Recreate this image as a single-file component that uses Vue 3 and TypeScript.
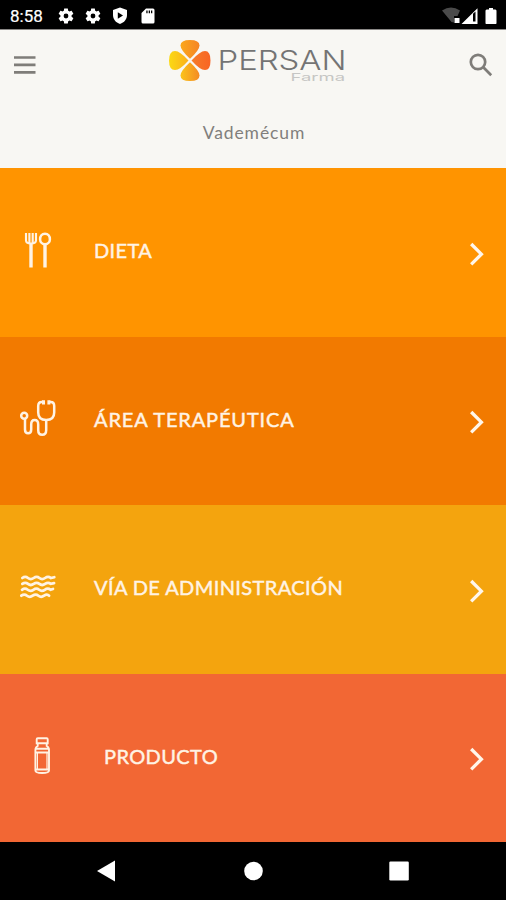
<script setup lang="ts">
interface MenuRow {
  id: 'diet' | 'area' | 'route' | 'product'
  label: string
}

const rows: MenuRow[] = [
  { id: 'diet', label: 'DIETA' },
  { id: 'area', label: 'ÁREA TERAPÉUTICA' },
  { id: 'route', label: 'VÍA DE ADMINISTRACIÓN' },
  { id: 'product', label: 'PRODUCTO' },
]

const gearPath =
  'M19.43 12.98c.04-.32.07-.64.07-.98s-.03-.66-.07-.98l2.11-1.65c.19-.15.24-.42.12-.64l-2-3.46c-.12-.22-.39-.3-.61-.22l-2.49 1c-.52-.4-1.08-.73-1.69-.98l-.38-2.65C14.46 2.18 14.25 2 14 2h-4c-.25 0-.46.18-.49.42l-.38 2.65c-.61.25-1.17.59-1.69.98l-2.49-1c-.23-.09-.49 0-.61.22l-2 3.46c-.13.22-.07.49.12.64l2.11 1.65c-.04.32-.07.65-.07.98s.03.66.07.98l-2.11 1.65c-.19.15-.24.42-.12.64l2 3.46c.12.22.39.3.61.22l2.49-1c.52.4 1.08.73 1.69.98l.38 2.65c.03.24.24.42.49.42h4c.25 0 .46-.18.49-.42l.38-2.65c.61-.25 1.17-.59 1.69-.98l2.49 1c.23.09.49 0 .61-.22l2-3.46c.12-.22.07-.49-.12-.64l-2.11-1.65zM12 15.2a3.2 3.2 0 1 1 0-6.4 3.2 3.2 0 0 1 0 6.4z'
</script>

<template>
  <div class="screen">
    <div class="status">
      <span class="clock">8:58</span>
      <svg class="gear" viewBox="0 0 24 24"><path :d="gearPath" /></svg>
      <svg class="gear second" viewBox="0 0 24 24"><path :d="gearPath" /></svg>
      <svg class="shield" viewBox="0 0 16 18">
        <path fill-rule="evenodd" d="M8 .5L15 3v5c0 4.3-2.8 7.500-7 9-4.200-1.500-7-4.700-7-9V3zM5.800 5.200v6.600L11 8.500z" />
      </svg>
      <svg class="card" viewBox="0 0 14 16">
        <path fill-rule="evenodd" d="M5 .4h7q1.500 0 1.500 1.500v12q0 1.500-1.500 1.500H2Q.500 15.400.500 13.900V5zM5.300 2.600v2.600h1.300V2.600zM7.700 2.600v2.600H9V2.600zM10 2.600v2.600h1.300V2.600z" />
      </svg>
      <svg class="signals" viewBox="0 0 56 18">
        <path class="wifi" d="M0 3.500Q9-2.500 18 3.500L15.500 9H12v6.500L9.500 15z" />
        <rect x="12.500" y="11" width="5" height="5" />
        <path fill-rule="evenodd" d="M35.500 1.200V17H19.500zM31 6.800V14.500h2.500V4.600z" />
        <path d="M44.700 2.500h2.300V1h4v1.500h2.300q1.200.3 1.200 1.200v12.600q0 .7-.7.700h-9.600q-.7 0-.7-.7V3.700q0-.9 1.200-1.200z" />
      </svg>
    </div>

    <header class="header">
      <div class="bar">
        <svg class="burger" viewBox="0 0 22 20">
          <path d="M0 2.500h21.500M0 9.900h21.500M0 17.300h21.500" />
        </svg>
        <svg class="logo" viewBox="0 0 180 48" role="img" aria-label="Persan Farma">
          <defs>
            <linearGradient id="petalTop" x1="0" x2="1"><stop offset="0" stop-color="#fba81c" /><stop offset="1" stop-color="#f58424" /></linearGradient>
            <linearGradient id="petalLeft" x1="0" x2="1"><stop offset="0" stop-color="#fbd914" /><stop offset="1" stop-color="#fbb01c" /></linearGradient>
            <linearGradient id="petalRight" x1="0" x2="1"><stop offset="0" stop-color="#f67c28" /><stop offset="1" stop-color="#f86424" /></linearGradient>
            <linearGradient id="petalBottom" x1="0" x2="1"><stop offset="0" stop-color="#fbc41a" /><stop offset="1" stop-color="#f48a22" /></linearGradient>
          </defs>
          <path fill="url(#petalTop)" d="M23 21.700Q13.500 13 13.500 8.500Q13.500 3 23 3T32.500 8.500Q32.500 13 23 21.700z" />
          <path fill="url(#petalRight)" d="M24.500 23.500Q33 14 38 14Q43.500 14 43.500 23.500T38 33Q33 33 24.500 23.500z" />
          <path fill="url(#petalBottom)" d="M23 25.300Q32.500 34 32.500 38.500Q32.500 44 23 44T13.500 38.500Q13.500 34 23 25.300z" />
          <path fill="url(#petalLeft)" d="M21.500 23.500Q13 33 8 33Q2 33 2 23.500T8 14Q13 14 21.500 23.500z" />
          <text class="brand" x="50.500" y="33" textLength="129" lengthAdjust="spacingAndGlyphs">PERSAN</text>
          <text class="sub" x="123.500" y="43.800" textLength="54.500" lengthAdjust="spacingAndGlyphs">Farma</text>
        </svg>
        <svg class="search" viewBox="0 0 24 24">
          <circle cx="9" cy="9" r="7.200" /><path d="M14.300 14.300L22.200 22.200" />
        </svg>
      </div>
      <h1 class="title">Vademécum</h1>
    </header>

    <main class="menu">
      <div v-for="row in rows" :key="row.id" class="row" :class="row.id">
        <svg class="icon" viewBox="0 0 40 40">
          <g v-if="row.id === 'diet'">
            <path class="thin" d="M8 3v7.500q0 3 5 3t5-3V3M11.400 3v10M14.700 3v10" />
            <path class="handle" d="M13 13v24.500M27 15v22.500" />
            <path class="line" d="M27 3.700c-3.100 0-4.900 2.700-4.900 5.500s1.900 5 4.900 5 4.900-2.200 4.900-5-1.800-5.500-4.900-5.500z" />
          </g>
          <g v-else-if="row.id === 'area'" class="line">
            <path d="M25 4h-1.300q-3.500 0-3.500 4v6.500q0 7.500 8 7.500t8-7.500V8q0-4-3.500-4h-1.500" />
            <path class="tip" d="M25.500 2.200v4.200M30.900 2.200v4.200" />
            <circle cx="6.200" cy="17.800" r="3" />
            <path d="M7 21v10.500q0 3.800 3.100 3.800t3.100-3.800v-5q0-4.500 3.500-4.500t3.500 4.500V32q0 4.800 4 4.800t4-4.800v-9.500" />
          </g>
          <g v-else-if="row.id === 'route'" class="wave">
            <path d="M4.300 11q3-2.200 5.700 0t5.700 0 5.700 0 5.700 0 5.700 0l3.500-.8" />
            <path d="M4.300 16.900q3-2.200 5.700 0t5.700 0 5.700 0 5.700 0 5.700 0l3.300-.8" />
            <path d="M4 22.800q3-2.200 5.700 0t5.700 0 5.700 0 5.700 0 5.700 0l2.500-.8" />
            <path d="M3.300 28.700q3-2.200 5.700 0t5.700 0 5.700 0 5.700 0 5 0" />
          </g>
          <g v-else class="bottle">
            <path d="M19.800 3.300h8.900q1 0 1 1v4h-11v-4q0-1 1.100-1zM19.700 8.300v2.700q-2.300 1.200-2.300 4v20.500q0 2.500 6.800 2.500t6.800-2.500V15q0-2.800-2.300-4V8.300M17 13.700h14.400M17.500 17.500h13.400M17.500 34.500h13.400" />
            <path class="edge" d="M19.400 18v16M29 18v16" />
          </g>
        </svg>
        <span class="label">{{ row.label }}</span>
        <svg class="chevron" viewBox="0 0 16 24"><path d="M2.200 2l10.200 10.200L2.200 22.400" /></svg>
      </div>
    </main>

    <nav class="nav">
      <svg viewBox="0 0 22 22"><path d="M1 11L19 .5v21z" /></svg>
      <svg viewBox="0 0 22 22"><circle cx="11.500" cy="11" r="9.300" /></svg>
      <svg viewBox="0 0 22 22"><rect x="1.300" y="1.500" width="19.500" height="19" rx="1.200" /></svg>
    </nav>
  </div>
</template>

<style>
body {
  margin: 0;
  background: #000;
}
</style>

<style scoped>
.screen {
  width: 506px;
  height: 900px;
  display: flex;
  flex-direction: column;
  overflow: hidden;
  background: #000;
  font-family: Lato, 'Open Sans', sans-serif;
}
svg {
  display: block;
  flex: none;
}
.status {
  box-sizing: border-box;
  height: 30px;
  flex: none;
  display: flex;
  align-items: center;
  padding: 2px 8px 0 10px;
  border-bottom: 1px solid #8a8886;
  fill: #fff;
}
.clock {
  width: 48px;
  color: #fff;
  font: 400 17px/20px Roboto, sans-serif;
  -webkit-text-stroke: 0.200px #fff;
}
.gear {
  width: 18px;
  height: 18px;
  margin-left: -1px;
}
.second {
  margin-left: 9px;
}
.shield {
  width: 16px;
  height: 18px;
  margin-left: 10px;
}
.card {
  width: 14px;
  height: 16px;
  margin-left: 12.500px;
}
.signals {
  width: 56px;
  height: 18px;
  margin-left: auto;
}
.wifi {
  fill: #4a4a4a;
}
.header {
  height: 138px;
  flex: none;
  background: #f8f7f3;
}
.bar {
  display: flex;
  align-items: center;
  height: 68px;
  padding: 0 13px 0 14px;
}
.burger {
  width: 22px;
  height: 20px;
  margin-top: 1px;
  fill: none;
  stroke: #7f7d79;
  stroke-width: 2.700;
}
.logo {
  width: 180px;
  height: 48px;
  margin: -6px 0 0 131px;
}
.brand {
  font: 300 27.500px Inter, sans-serif;
  fill: #747474;
}
.sub {
  font: 400 10.800px Inter, sans-serif;
  fill: #c6c6c4;
}
.search {
  width: 24px;
  height: 24px;
  margin: 2px 0 0 auto;
  fill: none;
  stroke: #7f7d79;
  stroke-width: 2.700;
}
.title {
  margin: 23px 0 0 2px;
  text-align: center;
  color: #817f7c;
  font: 400 17.500px/24px Lato, sans-serif;
  letter-spacing: 0.900px;
}
.menu {
  flex: none;
  height: 674px;
  display: grid;
  grid-template-rows: repeat(4, 1fr);
}
.row {
  display: flex;
  align-items: center;
  padding: 0 21px 0 18px;
  color: #fff3e4;
}
.diet { background: #ff9400; }
.area { background: #f27a00; }
.route { background: #f4a40e; }
.product { background: #f26734; }
.icon {
  width: 40px;
  height: 40px;
  margin-top: -5px;
  fill: none;
  stroke: #fff3e4;
}
.thin { stroke-width: 2.100; }
.handle { stroke-width: 3.400; }
.line { stroke-width: 2.500; }
.tip { stroke-width: 3; }
.wave { stroke-width: 2.700; stroke-linecap: round; }
.bottle { stroke-width: 1.900; }
.edge { stroke-width: 1.200; }
.label {
  margin: -4px 0 0 36px;
  font: 400 20px/26px Lato, sans-serif;
  letter-spacing: 0.400px;
  -webkit-text-stroke: 0.450px #fff3e4;
  white-space: nowrap;
}
.area .label {
  letter-spacing: 0.850px;
}
.product .label {
  margin-left: 46px;
}
.chevron {
  width: 16px;
  height: 24px;
  margin: 3px 0 0 auto;
  fill: none;
  stroke: #fff6ea;
  stroke-width: 3.300;
}
.nav {
  flex: 1;
  display: flex;
  justify-content: space-between;
  align-items: center;
  padding: 0 96px;
}
.nav svg {
  width: 22px;
  height: 22px;
  fill: #fff;
}
</style>
